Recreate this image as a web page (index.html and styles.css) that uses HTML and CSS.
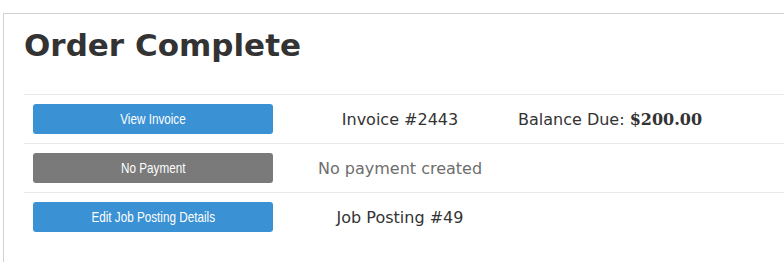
FILE: index.html
```html
<!DOCTYPE html>
<html>
<head>
<meta charset="utf-8">
<link rel="stylesheet" href="styles.css">
</head>
<body>
<div class="panel">
  <h1 class="title">Order Complete</h1>
  <div class="table">
    <div class="row">
      <div class="cell-btn"><a class="btn btn-blue"><span class="btn-label">View Invoice</span></a></div>
      <div class="cell-mid">Invoice #2443</div>
      <div class="cell-end">Balance Due: <strong class="amount">$200.00</strong></div>
    </div>
    <div class="row">
      <div class="cell-btn"><a class="btn btn-gray"><span class="btn-label">No Payment</span></a></div>
      <div class="cell-mid muted">No payment created</div>
      <div class="cell-end"></div>
    </div>
    <div class="row">
      <div class="cell-btn"><a class="btn btn-blue"><span class="btn-label">Edit Job Posting Details</span></a></div>
      <div class="cell-mid">Job Posting #49</div>
      <div class="cell-end"></div>
    </div>
  </div>
</div>
</body>
</html>
```
FILE: styles.css
```css
html, body {
  margin: 0;
  padding: 0;
  background: #ffffff;
  overflow: hidden;
}

body {
  font-family: "DejaVu Sans", Verdana, sans-serif;
  color: #333333;
  font-size: 16px;
}

.panel {
  margin: 13px 0 0 3px;
  border: 1px solid #d2d2d2;
  border-right: none;
  padding: 13px 0 40px 20px;
}

.title {
  margin: 0 0 31px 0;
  font-family: "DejaVu Sans", Verdana, sans-serif;
  font-weight: bold;
  font-size: 31px;
  line-height: 36px;
  color: #333333;
}

.table {
  display: flex;
  flex-direction: column;
}

.row {
  display: grid;
  grid-template-columns: 258px 236px 1fr;
  align-items: center;
  border-top: 1px solid #e9e9e9;
  height: 48px;
}

.cell-btn {
  padding: 0 9px;
  display: flex;
}

.btn {
  display: flex;
  align-items: center;
  justify-content: center;
  width: 100%;
  height: 30px;
  border-radius: 3px;
  color: #ffffff;
  text-decoration: none;
}

.btn-label {
  display: inline-block;
  font-family: "Liberation Sans", Arial, sans-serif;
  font-size: 15px;
  line-height: 18px;
  white-space: nowrap;
  transform: scaleX(0.78);
}

.btn-blue {
  background: #3a91d4;
}

.btn-gray {
  background: #7a7a7a;
}

.cell-mid {
  text-align: center;
}

.cell-end {
  text-align: left;
}

.muted {
  color: #6e6e6e;
}

.amount {
  font-family: "DejaVu Serif", serif;
  font-weight: bold;
  color: #333333;
}
```
